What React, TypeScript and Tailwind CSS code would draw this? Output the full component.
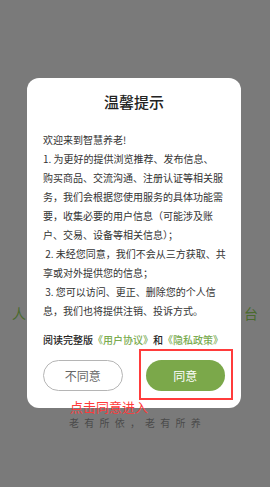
const FONT = "font-['Noto_Sans_CJK_SC','Noto_Sans',sans-serif]";

const LINES = [
  "欢迎来到智慧养老!",
  "1. 为更好的提供浏览推荐、发布信息、",
  "购买商品、交流沟通、注册认证等相关服",
  "务，我们会根据您使用服务的具体功能需",
  "要，收集必要的用户信息（可能涉及账",
  "户、交易、设备等相关信息）；",
  "\u00a02. 未经您同意，我们不会从三方获取、共",
  "享或对外提供您的信息；",
  "\u00a03. 您可以访问、更正、删除您的个人信",
  "息，我们也将提供注销、投诉方式。",
];

export default function App() {
  return (
    <div className={`relative h-[487px] w-[270px] overflow-hidden bg-[#7a7a7a] ${FONT}`}>
      {/* page behind the dimmed overlay */}
      <div className="flex flex-col items-center pt-[304px]">
        <div className="flex w-full justify-between px-[12px] text-[14px] leading-[18px] text-[#4a6a2e]">
          <span>人</span>
          <span>台</span>
        </div>
        <div className="mt-[94px] pl-[5px] text-[10px] leading-[14px] tracking-[5.2px] text-[#4a4a4a]">
          老有所依，老有所养
        </div>
      </div>

      {/* dialog */}
      <div className="absolute left-[27px] top-[78px] flex h-[330px] w-[214px] flex-col rounded-[12px] bg-white px-[16px] pt-[14px]">
        <h2 className="text-center text-[15px] leading-[20px] font-medium text-[#222]">温馨提示</h2>
        <div className="mt-[18px] text-[10px] leading-[19px] text-[#333]">
          {LINES.map((l) => (
            <div key={l} className="whitespace-nowrap">{l}</div>
          ))}
        </div>
        <p className="mt-[10px] whitespace-nowrap text-[10px] leading-[19px] font-medium text-[#222]">
          阅读完整版<span className="text-[#7aab4f]">《用户协议》</span>和<span className="text-[#7aab4f]">《隐私政策》</span>
        </p>
        <div className="mt-[11px] flex justify-center gap-[23px]">
          <button className="h-[31px] w-[80px] rounded-full border border-[#b5b5b5] text-[12px] text-[#666]">不同意</button>
          <button className="h-[31px] w-[80px] rounded-full bg-[#7ba84a] text-[12px] text-white">同意</button>
        </div>
      </div>

      {/* annotation */}
      <div className="absolute left-[139px] top-[349px] h-[51px] w-[94px] border-2 border-[#ff3b3b]" />
      <div className="absolute left-[70px] top-[400px] text-[13px] leading-[14px] text-[#ff3b3b]">点击同意进入</div>
    </div>
  );
}
